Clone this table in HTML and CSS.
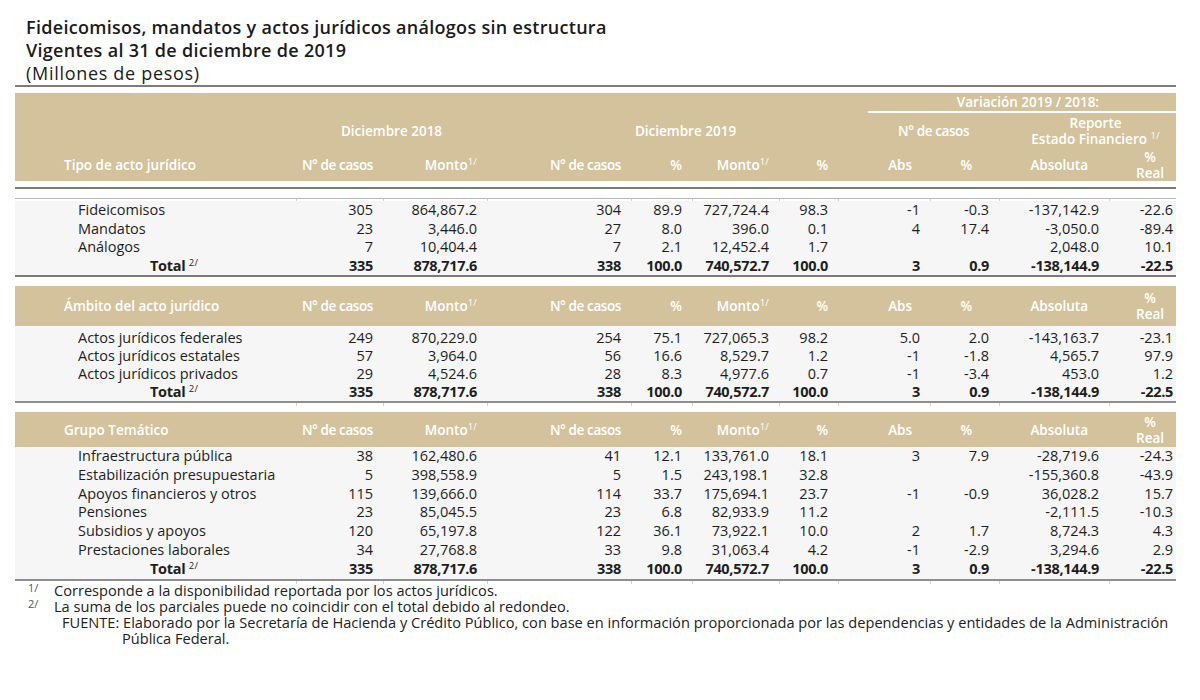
FILE: index.html
```html
<!DOCTYPE html>
<html lang="es">
<head>
<meta charset="utf-8">
<title>Fideicomisos, mandatos y actos jurídicos análogos sin estructura</title>
<link rel="stylesheet" href="styles.css">
</head>
<body>
<div class="page">
  <div class="title">
    <div class="t-strong">Fideicomisos, mandatos y actos jurídicos análogos sin estructura</div>
    <div class="t-strong">Vigentes al 31 de diciembre de 2019</div>
    <div class="t-light">(Millones de pesos)</div>
  </div>
  <div class="rule-top"></div>

  <table class="grid">
    <colgroup>
      <col class="c-label">
      <col class="c-n18">
      <col class="c-m18">
      <col class="c-n19">
      <col class="c-p1">
      <col class="c-m19">
      <col class="c-p2">
      <col class="c-abs">
      <col class="c-p3">
      <col class="c-absol">
      <col class="c-real">
    </colgroup>

    <tbody class="head">
      <tr class="ha">
        <td colspan="7"></td>
        <td colspan="4" class="var-cell"><div class="var">Variación 2019 / 2018:</div></td>
      </tr>
      <tr class="hb">
        <td></td>
        <td colspan="2" class="grp">Diciembre 2018</td>
        <td colspan="4" class="grp grp19">Diciembre 2019</td>
        <td colspan="2" class="grp grpcas"><span class="nc">N° de casos</span></td>
        <td colspan="2" class="grp grprep">Reporte<br>Estado Financiero <sup class="fn">1/</sup></td>
      </tr>
      <tr class="hc">
        <td class="lab">Tipo de acto jurídico</td>
        <td><span class="nc">N° de casos</span></td>
        <td>Monto<sup class="fn">1/</sup></td>
        <td><span class="nc">N° de casos</span></td>
        <td>%</td>
        <td>Monto<sup class="fn">1/</sup></td>
        <td>%</td>
        <td class="h-abs">Abs</td>
        <td class="h-p3">%</td>
        <td class="h-absol">Absoluta</td>
        <td class="h-real">%<br>Real</td>
      </tr>
    </tbody>

    <tbody>
      <tr class="gap6"><td colspan="11"></td></tr>
      <tr class="line-dark"><td colspan="11"></td></tr>
      <tr class="gap9"><td colspan="11"></td></tr>
      <tr class="line-light"><td colspan="11"></td></tr>
      <tr class="ticks t2"><td></td><td></td><td></td><td></td><td></td><td></td><td></td><td></td><td></td><td></td><td></td></tr>
    </tbody>

    <tbody class="data s1">
      <tr><td class="lab">Fideicomisos</td><td>305</td><td>864,867.2</td><td>304</td><td>89.9</td><td>727,724.4</td><td>98.3</td><td>-1</td><td>-0.3</td><td>-137,142.9</td><td>-22.6</td></tr>
      <tr><td class="lab">Mandatos</td><td>23</td><td>3,446.0</td><td>27</td><td>8.0</td><td>396.0</td><td>0.1</td><td>4</td><td>17.4</td><td>-3,050.0</td><td>-89.4</td></tr>
      <tr><td class="lab">Análogos</td><td>7</td><td>10,404.4</td><td>7</td><td>2.1</td><td>12,452.4</td><td>1.7</td><td></td><td></td><td>2,048.0</td><td>10.1</td></tr>
      <tr class="total"><td class="tot">Total <sup class="fn">2/</sup></td><td>335</td><td>878,717.6</td><td>338</td><td>100.0</td><td>740,572.7</td><td>100.0</td><td>3</td><td>0.9</td><td>-138,144.9</td><td>-22.5</td></tr>
    </tbody>

    <tbody>
      <tr class="line-dark"><td colspan="11"></td></tr>
      <tr class="gap9"><td colspan="11"></td></tr>
    </tbody>

    <tbody class="head">
      <tr class="hs hs2">
        <td class="lab">Ámbito del acto jurídico</td>
        <td><span class="nc">N° de casos</span></td>
        <td>Monto<sup class="fn">1/</sup></td>
        <td><span class="nc">N° de casos</span></td>
        <td>%</td>
        <td>Monto<sup class="fn">1/</sup></td>
        <td>%</td>
        <td class="h-abs">Abs</td>
        <td class="h-p3">%</td>
        <td class="h-absol">Absoluta</td>
        <td class="h-real">%<br>Real</td>
      </tr>
    </tbody>

    <tbody class="data s2">
      <tr class="pad3"><td colspan="11"></td></tr>
      <tr><td class="lab">Actos jurídicos federales</td><td>249</td><td>870,229.0</td><td>254</td><td>75.1</td><td>727,065.3</td><td>98.2</td><td>5.0</td><td>2.0</td><td>-143,163.7</td><td>-23.1</td></tr>
      <tr><td class="lab">Actos jurídicos estatales</td><td>57</td><td>3,964.0</td><td>56</td><td>16.6</td><td>8,529.7</td><td>1.2</td><td>-1</td><td>-1.8</td><td>4,565.7</td><td>97.9</td></tr>
      <tr><td class="lab">Actos jurídicos privados</td><td>29</td><td>4,524.6</td><td>28</td><td>8.3</td><td>4,977.6</td><td>0.7</td><td>-1</td><td>-3.4</td><td>453.0</td><td>1.2</td></tr>
      <tr class="total"><td class="tot">Total <sup class="fn">2/</sup></td><td>335</td><td>878,717.6</td><td>338</td><td>100.0</td><td>740,572.7</td><td>100.0</td><td>3</td><td>0.9</td><td>-138,144.9</td><td>-22.5</td></tr>
    </tbody>

    <tbody>
      <tr class="line-mid"><td colspan="11"></td></tr>
      <tr class="ticks"><td></td><td></td><td></td><td></td><td></td><td></td><td></td><td></td><td></td><td></td><td></td></tr>
      <tr class="gap6"><td colspan="11"></td></tr>
    </tbody>

    <tbody class="head">
      <tr class="hs hs3">
        <td class="lab">Grupo Temático</td>
        <td><span class="nc">N° de casos</span></td>
        <td>Monto<sup class="fn">1/</sup></td>
        <td><span class="nc">N° de casos</span></td>
        <td>%</td>
        <td>Monto<sup class="fn">1/</sup></td>
        <td>%</td>
        <td class="h-abs">Abs</td>
        <td class="h-p3">%</td>
        <td class="h-absol">Absoluta</td>
        <td class="h-real">%<br>Real</td>
      </tr>
    </tbody>

    <tbody class="data s3">
      <tr><td class="lab">Infraestructura pública</td><td>38</td><td>162,480.6</td><td>41</td><td>12.1</td><td>133,761.0</td><td>18.1</td><td>3</td><td>7.9</td><td>-28,719.6</td><td>-24.3</td></tr>
      <tr><td class="lab">Estabilización presupuestaria</td><td>5</td><td>398,558.9</td><td>5</td><td>1.5</td><td>243,198.1</td><td>32.8</td><td></td><td></td><td>-155,360.8</td><td>-43.9</td></tr>
      <tr><td class="lab">Apoyos financieros y otros</td><td>115</td><td>139,666.0</td><td>114</td><td>33.7</td><td>175,694.1</td><td>23.7</td><td>-1</td><td>-0.9</td><td>36,028.2</td><td>15.7</td></tr>
      <tr><td class="lab">Pensiones</td><td>23</td><td>85,045.5</td><td>23</td><td>6.8</td><td>82,933.9</td><td>11.2</td><td></td><td></td><td>-2,111.5</td><td>-10.3</td></tr>
      <tr><td class="lab">Subsidios y apoyos</td><td>120</td><td>65,197.8</td><td>122</td><td>36.1</td><td>73,922.1</td><td>10.0</td><td>2</td><td>1.7</td><td>8,724.3</td><td>4.3</td></tr>
      <tr><td class="lab">Prestaciones laborales</td><td>34</td><td>27,768.8</td><td>33</td><td>9.8</td><td>31,063.4</td><td>4.2</td><td>-1</td><td>-2.9</td><td>3,294.6</td><td>2.9</td></tr>
      <tr class="total"><td class="tot">Total <sup class="fn">2/</sup></td><td>335</td><td>878,717.6</td><td>338</td><td>100.0</td><td>740,572.7</td><td>100.0</td><td>3</td><td>0.9</td><td>-138,144.9</td><td>-22.5</td></tr>
    </tbody>

    <tbody>
      <tr class="line-mid"><td colspan="11"></td></tr>
      <tr class="ticks"><td></td><td></td><td></td><td></td><td></td><td></td><td></td><td></td><td></td><td></td><td></td></tr>
    </tbody>
  </table>

  <div class="notes">
    <div class="note"><span class="mk">1/</span><span class="nt">Corresponde a la disponibilidad reportada por los actos jurídicos.</span></div>
    <div class="note"><span class="mk">2/</span><span class="nt">La suma de los parciales puede no coincidir con el total debido al redondeo.</span></div>
    <p class="source">FUENTE: Elaborado por la Secretaría de Hacienda y Crédito Público, con base en información proporcionada por las dependencias y entidades de la Administración Pública Federal.</p>
  </div>
</div>
</body>
</html>
```

FILE: styles.css
```css
html, body {
  margin: 0;
  padding: 0;
  background: #ffffff;
}

body {
  font-family: "Open Sans", "Liberation Sans", sans-serif;
  color: #1f1f1f;
}

.page {
  width: 1161px;
  padding: 16px 0 0 15px;
}

.title {
  padding-left: 11px;
  font-size: 18px;
  line-height: 23px;
  color: #1b1b1b;
}

.t-strong {
  font-weight: 600;
  letter-spacing: 0.3px;
}

.t-light {
  font-weight: 400;
  letter-spacing: 0.7px;
}

.rule-top {
  height: 2px;
  background: #7d7d7d;
}

.grid {
  width: 1161px;
  table-layout: fixed;
  border-collapse: separate;
  border-spacing: 0;
  margin-top: 6px;
}

.c-label { width: 281px; }
.c-n18 { width: 87px; }
.c-m18 { width: 104px; }
.c-n19 { width: 144px; }
.c-p1 { width: 61px; }
.c-m19 { width: 87px; }
.c-p2 { width: 59px; }
.c-abs { width: 92px; }
.c-p3 { width: 69px; }
.c-absol { width: 110px; }
.c-real { width: 67px; }

.grid td {
  padding: 0;
}

.head td {
  background: #d3c29c;
  color: #ffffff;
  font-size: 13.5px;
  font-weight: 600;
  text-align: right;
  padding-right: 10px;
  white-space: nowrap;
  line-height: 16px;
}

.nc {
  letter-spacing: -0.4px;
}

.head td.lab {
  text-align: left;
  padding-left: 49px;
  padding-right: 0;
}

.head td.h-abs { padding-right: 18px; }
.head td.h-p3 { padding-right: 27px; }
.head td.h-absol { padding-right: 21px; }
.head td.h-real {
  text-align: center;
  padding-right: 0;
  padding-left: 15px;
}

.ha td {
  height: 19px;
  vertical-align: bottom;
}

.head td.var-cell {
  padding: 0;
}

.var {
  margin-left: 30px;
  border-bottom: 2px solid #ffffff;
  text-align: right;
  padding-right: 77px;
  line-height: 18px;
}

.hb td {
  height: 35px;
  vertical-align: middle;
}

.hb td.grp {
  text-align: center;
  padding-right: 0;
}

.hb td.grp19 { padding-left: 46px; }
.hb td.grpcas { padding-left: 30px; }
.hb td.grprep { padding-left: 16px; }

.hc td {
  height: 33px;
  vertical-align: middle;
}

.hs2 td {
  height: 40px;
  vertical-align: middle;
}

.hs3 td {
  height: 35px;
  vertical-align: middle;
}

sup.fn {
  font-size: 9.5px;
  line-height: 0;
  vertical-align: 5px;
  font-weight: 400;
  letter-spacing: 0.2px;
}

.gap5 td { height: 5px; }
.gap6 td { height: 6px; }
.gap9 td { height: 9px; }
.pad3 td { height: 3px; }

.line-dark td {
  height: 2px;
  background: #7b7b7b;
}

.line-mid td {
  height: 2px;
  background: #8e8e8e;
}

.line-light td {
  height: 1px;
  background: #b8b8b8;
}

.ticks td {
  height: 3px;
  box-shadow: inset 1px 0 0 #cfcfcf;
}

.ticks.t2 td {
  height: 2px;
}

.ticks td:first-child {
  box-shadow: none;
}

.data td {
  background: #f6f6f6;
  font-size: 14.5px;
  text-align: right;
  padding-right: 10px;
  white-space: nowrap;
  color: #1e1e1e;
}

.data td:last-child {
  padding-right: 3px;
}

.data td.lab {
  text-align: left;
  padding-left: 63px;
  padding-right: 0;
}

.data td.tot {
  text-align: left;
  padding-left: 135px;
  padding-right: 0;
}

.data .total td {
  font-weight: 700;
  letter-spacing: -0.3px;
}

.data .pad3 td {
  height: 3px;
}

.s1 tr:not(.pad3) td { height: 18.5px; line-height: 18.5px; }
.s2 tr:not(.pad3) td { height: 18px; line-height: 18px; }
.s3 tr td { height: 18.8px; line-height: 18.8px; }

.notes {
  margin-top: -2px;
  font-size: 14.6px;
  line-height: 16px;
  color: #222222;
}

.note {
  display: flex;
  padding-left: 13px;
  height: 16px;
}

.note .mk {
  width: 26px;
  flex: none;
  font-size: 11px;
  line-height: 12px;
  color: #555555;
}

.note .nt {
  line-height: 16px;
}

.source {
  margin: 0;
  padding-left: 107px;
  text-indent: -60px;
}
```
